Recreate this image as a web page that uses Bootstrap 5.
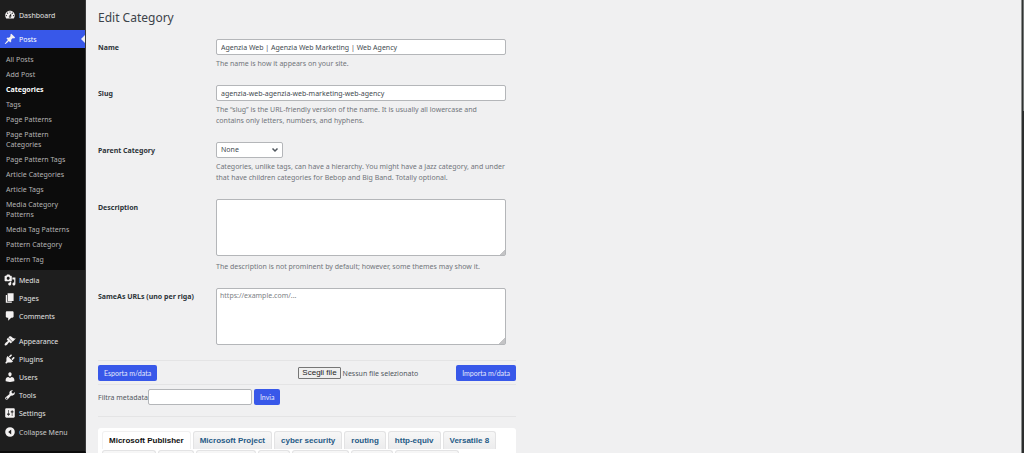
<!DOCTYPE html>
<html lang="en">
<head>
<meta charset="utf-8">
<meta name="viewport" content="width=device-width, initial-scale=1">
<title>Edit Category</title>
<link rel="stylesheet" href="https://cdn.jsdelivr.net/npm/bootstrap@5.3.0/dist/css/bootstrap.min.css">
<style>
  :root { --accent: #3858e9; --edge: #b4b6b9; }
  body { font-family: "Noto Sans", "Open Sans", sans-serif; font-size: 7px; line-height: 11px; color: #50575e; background: #f0f0f1; }
  .side { width: 86px; background: #1e1e1e; border-right: 1px solid #3a3a3b; border-bottom: 2px solid #0c0c0c; }
  .side a, .side button { color: #e2e2e2; text-decoration: none; }
  .menu-item { height: 18px; padding-left: 4px; gap: 3px; white-space: nowrap; font-size: 7px; }
  .menu-item svg { width: 12px; height: 12px; fill: #f3f1f1; flex: none; }
  .menu-first { margin: 6px 0; }
  .menu-item.current { background: var(--accent); color: #fff; }
  .menu-item.current::after { content: ""; position: absolute; right: 0; top: 5px; border: 4px solid transparent; border-right-color: #f0f0f1; border-left: 0; }
  .submenu { background: #0c0c0c; padding: 5px 0 2px; margin-bottom: 1px; }
  .submenu a { display: block; padding: 2px 12px 3px 6px; font-size: 7px; line-height: 10px; color: #b4b4b4; }
  .submenu a.active { color: #fff; font-weight: 700; }
  .menu-group { margin-bottom: 7px; }
  .side .collapse-btn { color: #c8c8c8; margin-top: 1px; }
  .page { padding: 10px 12px 0; }
  .panel { max-width: 418px; }
  h1 { font-size: 12px; line-height: 16px; font-weight: 400; color: #3c434a; margin-bottom: 13px; }
  .field { display: grid; grid-template-columns: 118px minmax(0, 1fr); margin-bottom: 16px; padding-right: 10px; }
  .field:last-child { margin-bottom: 15px; }
  .field > label { font-weight: 700; color: #2c3338; padding-top: 3px; }
  .box { font-size: 7px; line-height: 10px; border: 1px solid var(--edge); border-radius: 2px; background-color: #fff; color: #434a50; padding: 2px 4px; height: 16px; min-height: 0; }
  .box::placeholder { color: #7d8185; }
  .area { height: 57px; padding: 2px 3px; }
  .area::-webkit-resizer { background: linear-gradient(135deg, transparent 80%, #c4c4c6 80%); }
  .pick { width: 67px; background-size: 8px 8px; background-position: right 3px center; background-image: url("data:image/svg+xml,%3csvg xmlns='http://www.w3.org/2000/svg' viewBox='0 0 16 16'%3e%3cpath fill='none' stroke='%2350575e' stroke-width='3' d='m3 5 5 5 5-5'/%3e%3c/svg%3e"); }
  .help { margin: 3px 0 0; color: #70757b; }
  .area + .help { margin-top: 5px; }
  .act { height: 16px; padding: 0 6px; border: 0; border-radius: 2px; background: var(--accent); color: #e6eafc; font: 7px/16px Lato, "Noto Sans", sans-serif; }
  .act:hover { background: #2145e6; color: #fff; }
  .rule { border-top: 1px solid #e4e4e5; }
  .tool-row { padding: 4px 0 3px; }
  .uploads { gap: 38px; }
  .file-btn { border: 1px solid #767676; border-radius: 1px; background: #efefef; color: #1d1d1d; font: 8px/10px "Liberation Sans", sans-serif; padding: 0 3px; margin-right: 2px; }
  .filter { width: 104px; margin-right: 2px; }
  .divider { margin: 8px 0 11px; opacity: 1; }
  .tabs { background: #fff; border-radius: 3px 3px 0 0; padding: 3px 4px 0; gap: 1px 2px; font: 700 8px/18px "Liberation Sans", sans-serif; }
  .tabs .nav-link, .stub { height: 18px; padding: 0 6px; border: 1px solid #e3e3e4; border-bottom: 0; border-radius: 3px 3px 0 0; background: linear-gradient(#f7f7f7, #ececed); color: #1f5a86; }
  .tabs .nav-link.active { background: #fff; color: #111; border-color: #f1f1f1; }
  .rail { width: 3px; background: #2b2d2d; border-left: 1px solid #8b8e8d; }
  .thumb { height: 111px; background: #747877; border-left: 1px solid #303332; }
</style>
</head>
<body>
<div class="d-flex vh-100 overflow-hidden">
  <nav class="side flex-shrink-0 overflow-hidden" aria-label="Main menu">
    <a href="#" class="menu-item menu-first d-flex align-items-center">
      <svg viewBox="0 0 20 20"><path d="M3.76 16h12.48c1.1-1.37 1.76-3.11 1.76-5 0-4.42-3.58-8-8-8s-8 3.58-8 8c0 1.89.66 3.63 1.76 5zM10 4c.55 0 1 .45 1 1s-.45 1-1 1-1-.45-1-1 .45-1 1-1zM6 6c.55 0 1 .45 1 1s-.45 1-1 1-1-.45-1-1 .45-1 1-1zm8 0c.55 0 1 .45 1 1s-.45 1-1 1-1-.45-1-1 .45-1 1-1zm-5.37 5.55L12 7v6c0 1.1-.9 2-2 2s-2-.9-2-2c0-.57.24-1.08.63-1.45zM4 10c.55 0 1 .45 1 1s-.45 1-1 1-1-.45-1-1 .45-1 1-1zm12 0c.55 0 1 .45 1 1s-.45 1-1 1-1-.45-1-1 .45-1 1-1zm-5 3c0-.55-.45-1-1-1s-1 .45-1 1 .45 1 1 1 1-.45 1-1z"/></svg>Dashboard</a>
    <a href="#" class="menu-item current position-relative d-flex align-items-center">
      <svg viewBox="0 0 20 20"><path d="M10.44 3.02l1.82-1.82 6.36 6.35-1.83 1.82c-1.05-.68-2.48-.57-3.41.36l-.75.75c-.92.93-1.04 2.35-.35 3.41l-1.83 1.82-2.41-2.41-2.8 2.79c-.42.42-3.38 2.71-3.8 2.29s1.86-3.39 2.28-3.81l2.79-2.79L4.1 9.36l1.83-1.82c1.05.69 2.48.57 3.4-.36l.75-.75c.93-.92 1.05-2.35.36-3.41z"/></svg>Posts</a>
    <div class="submenu">
      <a href="#">All Posts</a><a href="#">Add Post</a><a href="#" class="active">Categories</a><a href="#">Tags</a><a href="#">Page Patterns</a><a href="#">Page Pattern Categories</a><a href="#">Page Pattern Tags</a><a href="#">Article Categories</a><a href="#">Article Tags</a><a href="#">Media Category Patterns</a><a href="#">Media Tag Patterns</a><a href="#">Pattern Category</a><a href="#">Pattern Tag</a>
    </div>
    <div class="menu-group">
      <a href="#" class="menu-item d-flex align-items-center"><svg viewBox="0 0 20 20"><path d="M13 11V4c0-.55-.45-1-1-1h-1.67L9 1H5L3.67 3H2c-.55 0-1 .45-1 1v7c0 .55.45 1 1 1h10c.55 0 1-.45 1-1zM7 4.5c1.38 0 2.5 1.12 2.5 2.5S8.38 9.5 7 9.5 4.5 8.38 4.5 7 5.62 4.5 7 4.5zM14 6h5v10.5c0 1.38-1.12 2.5-2.5 2.5S14 17.88 14 16.5s1.12-2.5 2.5-2.5c.17 0 .34.02.5.05V9h-3V6zm-4 8.05V13h2v3.5c0 1.38-1.12 2.5-2.5 2.5S7 17.88 7 16.5 8.12 14 9.5 14c.17 0 .34.02.5.05z"/></svg>Media</a>
      <a href="#" class="menu-item d-flex align-items-center"><svg viewBox="0 0 20 20"><path d="M6 15V2h10v13H6zm-1 1h8v2H3V5h2v11z"/></svg>Pages</a>
      <a href="#" class="menu-item d-flex align-items-center"><svg viewBox="0 0 20 20"><path d="M5 2h9c1.1 0 2 .9 2 2v7c0 1.1-.9 2-2 2h-2l-5 5v-5H5c-1.1 0-2-.9-2-2V4c0-1.1.9-2 2-2z"/></svg>Comments</a>
    </div>
    <a href="#" class="menu-item d-flex align-items-center"><svg viewBox="0 0 20 20"><path d="M14.48 11.06L7.41 3.99l1.5-1.5c.5-.56 2.3-.47 3.51.32 1.21.8 1.43 1.28 2.91 2.1 1.18.64 2.45 1.26 4.45.85zm-.71.71L6.7 4.7 4.93 6.47c-.39.39-.39 1.02 0 1.41l1.06 1.06c.39.39.39 1.03 0 1.42-.6.6-1.43 1.11-2.21 1.69-.35.26-.7.53-1.01.84C1.43 14.23.4 16.08 1.4 17.07c.99 1 2.84-.03 4.18-1.36.31-.31.58-.66.85-1.02.57-.78 1.08-1.61 1.69-2.21.39-.39 1.02-.39 1.41 0l1.06 1.06c.39.39 1.02.39 1.41 0z"/></svg>Appearance</a>
    <a href="#" class="menu-item d-flex align-items-center"><svg viewBox="0 0 20 20"><path d="M13.11 4.36L9.87 7.6 8 5.73l3.24-3.24c.35-.34 1.05-.2 1.56.32.52.51.66 1.21.31 1.55zm-8 1.77l.91-1.12 9.01 9.01-1.19.84c-.71.71-2.63 1.16-3.82 1.16H6.14L4.9 17.26c-.59.59-1.54.59-2.12 0-.59-.58-.59-1.53 0-2.12l1.24-1.24v-3.88c0-1.13.4-3.19 1.09-3.89zm7.26 3.97l3.24-3.24c.34-.35 1.04-.21 1.55.31.52.51.66 1.21.31 1.55l-3.24 3.25z"/></svg>Plugins</a>
    <a href="#" class="menu-item d-flex align-items-center"><svg viewBox="0 0 20 20"><path d="M10 9.25c-2.27 0-2.73-3.44-2.73-3.44C7 4.02 7.82 2 9.97 2c2.16 0 2.98 2.02 2.71 3.81 0 0-.41 3.44-2.68 3.44zm0 2.57L12.72 10c2.39 0 4.52 2.33 4.52 4.53v2.49s-3.65 1.13-7.24 1.13c-3.65 0-7.24-1.13-7.24-1.13v-2.49c0-2.25 1.94-4.48 4.47-4.48z"/></svg>Users</a>
    <a href="#" class="menu-item d-flex align-items-center"><svg viewBox="0 0 20 20"><path d="M16.68 9.77c-1.34 1.34-3.3 1.67-4.95.99l-5.41 6.52c-.99.99-2.59.99-3.58 0s-.99-2.59 0-3.57l6.52-5.42c-.68-1.65-.35-3.61.99-4.95 1.28-1.28 3.12-1.62 4.72-1.06l-2.89 2.89 2.82 2.82 2.86-2.87c.53 1.58.18 3.39-1.08 4.65zM3.81 16.21c.4.39 1.04.39 1.43 0 .4-.4.4-1.04 0-1.43-.39-.4-1.03-.4-1.43 0-.39.39-.39 1.03 0 1.43z"/></svg>Tools</a>
    <a href="#" class="menu-item d-flex align-items-center"><svg viewBox="0 0 20 20"><path d="M18 16V4c0-1.1-.9-2-2-2H4c-1.1 0-2 .9-2 2v12c0 1.1.9 2 2 2h12c1.1 0 2-.9 2-2zM8 11h1c.55 0 1 .45 1 1s-.45 1-1 1H8v1.5c0 .28-.22.5-.5.5s-.5-.22-.5-.5V13H6c-.55 0-1-.45-1-1s.45-1 1-1h1V5.5c0-.28.22-.5.5-.5s.5.22.5.5V11zm5-2h-1c-.55 0-1-.45-1-1s.45-1 1-1h1V5.5c0-.28.22-.5.5-.5s.5.22.5.5V7h1c.55 0 1 .45 1 1s-.45 1-1 1h-1v5.5c0 .28-.22.5-.5.5s-.5-.22-.5-.5V9z"/></svg>Settings</a>
    <button type="button" class="menu-item collapse-btn d-flex align-items-center w-100 border-0 bg-transparent py-0 pe-0"><svg viewBox="0 0 20 20"><path fill-rule="evenodd" d="M10 2a8 8 0 1 0 0 16 8 8 0 0 0 0-16zm2 4v8l-5-4z"/></svg>Collapse Menu</button>
  </nav>

  <main class="page flex-grow-1 overflow-hidden">
    <div class="panel">
      <h1>Edit Category</h1>
      <form>
        <div class="field">
          <label for="name">Name</label>
          <div><input id="name" type="text" class="form-control box" value="Agenzia Web | Agenzia Web Marketing | Web Agency">
          <p class="help">The name is how it appears on your site.</p></div>
        </div>
        <div class="field">
          <label for="slug">Slug</label>
          <div><input id="slug" type="text" class="form-control box" value="agenzia-web-agenzia-web-marketing-web-agency">
          <p class="help">The “slug” is the URL-friendly version of the name. It is usually all lowercase and contains only letters, numbers, and hyphens.</p></div>
        </div>
        <div class="field">
          <label for="parent">Parent Category</label>
          <div><select id="parent" class="form-select box pick"><option>None</option></select>
          <p class="help">Categories, unlike tags, can have a hierarchy. You might have a Jazz category, and under that have children categories for Bebop and Big Band. Totally optional.</p></div>
        </div>
        <div class="field">
          <label for="desc">Description</label>
          <div><textarea id="desc" class="form-control box area"></textarea>
          <p class="help">The description is not prominent by default; however, some themes may show it.</p></div>
        </div>
        <div class="field">
          <label for="same">SameAs URLs (uno per riga)</label>
          <div><textarea id="same" class="form-control box area" placeholder="https://example.com/..."></textarea></div>
        </div>
      </form>
      <div class="rule tool-row d-flex justify-content-between align-items-center">
        <button type="button" class="btn act">Esporta m/data</button>
        <div class="uploads d-flex align-items-center">
          <div class="d-flex align-items-center">
            <input id="file" type="file" class="visually-hidden">
            <label for="file" class="file-btn">Scegli file</label><span>Nessun file selezionato</span>
          </div>
          <button type="button" class="btn act">Importa m/data</button>
        </div>
      </div>
      <div class="rule tool-row d-flex align-items-center">
        <label for="filter">Filtra metadata</label>
        <input id="filter" type="text" class="form-control box filter">
        <button type="button" class="btn act">Invia</button>
      </div>
      <hr class="divider rule">
      <nav class="tabs nav" aria-label="Topics">
        <a href="#" class="nav-link active">Microsoft Publisher</a><a href="#" class="nav-link">Microsoft Project</a><a href="#" class="nav-link">cyber security</a><a href="#" class="nav-link">routing</a><a href="#" class="nav-link">http-equiv</a><a href="#" class="nav-link">Versatile 8</a>
        <span class="stub" style="width:54px"></span><span class="stub" style="width:36px"></span><span class="stub" style="width:60px"></span><span class="stub" style="width:32px"></span><span class="stub" style="width:57px"></span><span class="stub" style="width:42px"></span><span class="stub" style="width:64px"></span>
      </nav>
    </div>
  </main>
  <div class="rail flex-shrink-0"><div class="thumb"></div></div>
</div>
<script src="https://cdn.jsdelivr.net/npm/bootstrap@5.3.0/dist/js/bootstrap.bundle.min.js"></script>
</body>
</html>
